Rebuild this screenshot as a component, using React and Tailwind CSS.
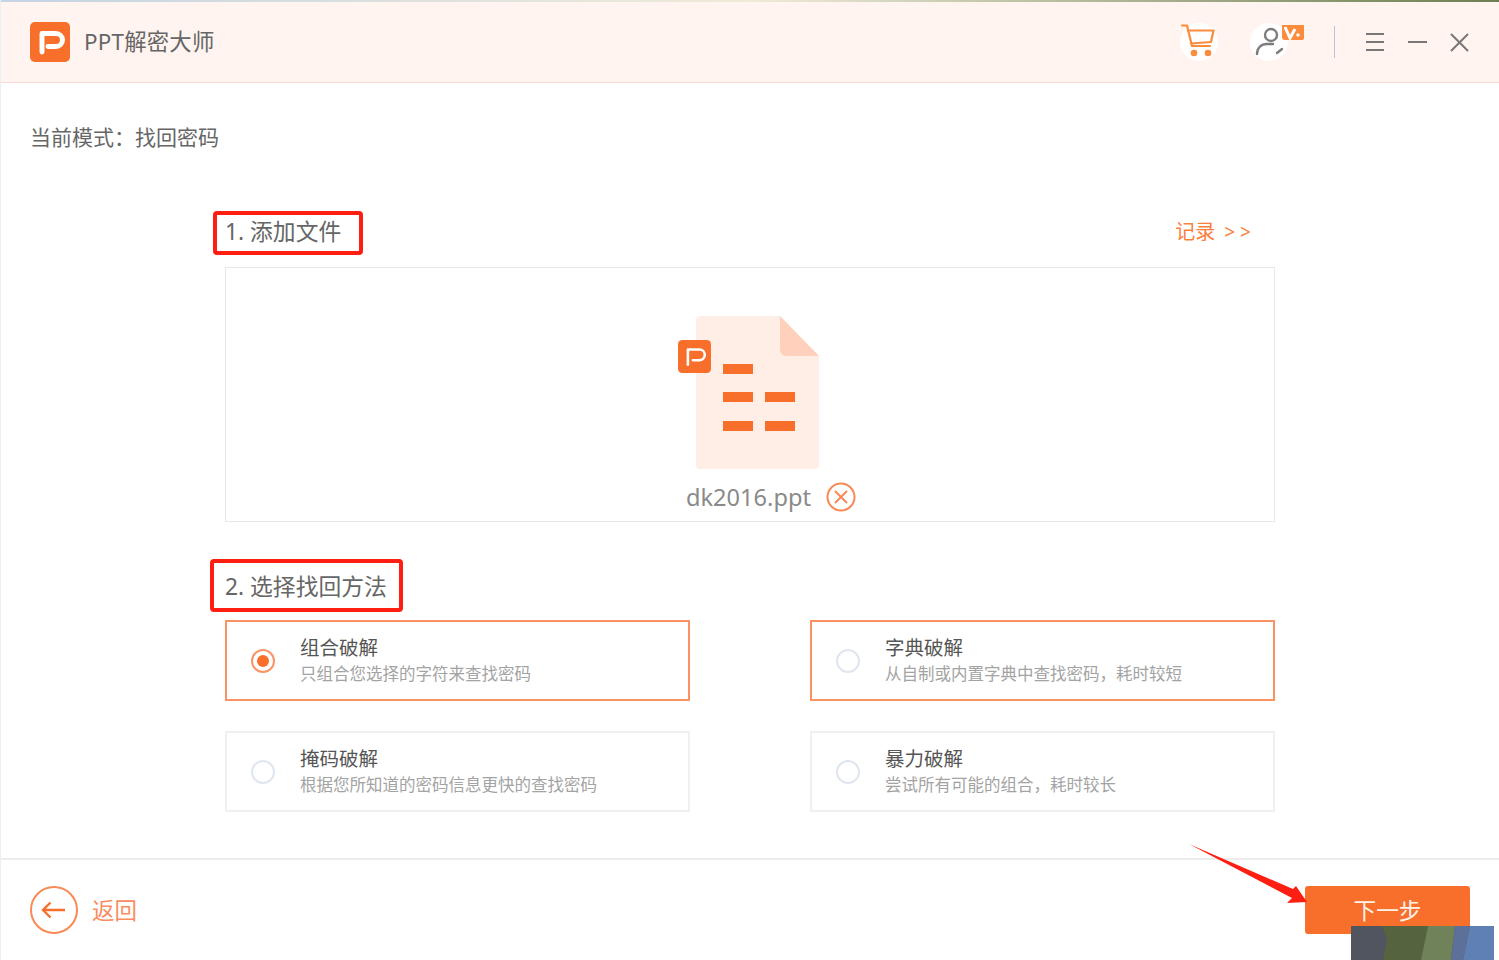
import React from "react";

const PLogo = ({ size, stroke = 3.8 }) => (
  <svg width={size} height={size} viewBox="0 0 40 40" className="block">
    <rect width="40" height="40" rx="5" fill="#f76f2b" />
    <path d="M12 30V11.500H26a6.500 6.500 0 0 1 0 13H18" fill="none" stroke="#fff" strokeWidth={stroke * 1.3} strokeLinecap="round" strokeLinejoin="round" />
  </svg>
);

const Radio = ({ checked }) =>
  checked ? (
    <span className="w-6 h-6 rounded-full border-2 border-[#fa9468] flex items-center justify-center shrink-0">
      <span className="w-3 h-3 rounded-full bg-[#f76f2b]" />
    </span>
  ) : (
    <span className="w-6 h-6 rounded-full border-2 border-[#dfe6f0] shrink-0" />
  );

const Option = ({ title, desc, active, checked }) => (
  <div className={`h-[81px] flex items-center pl-[24px] ${active ? "border-2 border-[#fb9264]" : "border-2 border-[#f0f0f0]"}`}>
    <Radio checked={checked} />
    <div className="ml-[25px] mb-[2px] flex flex-col">
      <span className="text-[19.500px] leading-[27px] text-[#555]">{title}</span>
      <span className="text-[16.500px] leading-[25px] text-[#a3a3a3]">{desc}</span>
    </div>
  </div>
);

const Label = ({ children, cls }) => (
  <div className={`border-[4px] border-[#ff1f12] rounded-[4px] flex items-center text-[22.800px] text-[#666] whitespace-nowrap ${cls}`}>
    {children}
  </div>
);

export default function App() {
  return (
    <div
      className="w-[1499px] h-[960px] relative overflow-hidden bg-white flex flex-col border-l border-[#e9eff6]"
      style={{ fontFamily: '"Noto Sans", "Noto Sans CJK SC", sans-serif' }}
    >
      <div className="h-[2px] -ml-px shrink-0 bg-gradient-to-r from-[#c4d4e4] via-[#f0ebd8] to-[#6d7f52]" />
      <header className="h-[81px] shrink-0 bg-[#fff4f0] border-b border-[#fbd8d8] flex items-center pl-[29px] pr-[30px]">
        <PLogo size={40} />
        <span className="ml-[14px] text-[22.400px] text-[#666] tracking-[0.2px]">PPT解密大师</span>
        <div className="ml-auto flex items-center">
          <span className="w-[38px] h-[38px] rounded-full bg-white flex items-center justify-center">
            <svg width="36" height="36" viewBox="0 0 36 36" fill="none" stroke="#fa8c3c" strokeWidth="2.200" strokeLinejoin="round" strokeLinecap="round">
              <path d="M1 1.500h5l5 20.500h18" />
              <path d="M7 6.500h25.500L30 18 10 19.500" />
              <circle cx="13" cy="29" r="2.200" fill="#fa8c3c" />
              <circle cx="27" cy="29" r="2.200" fill="#fa8c3c" />
            </svg>
          </span>
          <div className="ml-[32px] relative w-[38px] h-[38px] rounded-full bg-white">
            <svg width="38" height="38" viewBox="0 0 38 38" fill="none" stroke="#7c7c7c" strokeWidth="2.400" strokeLinecap="round" className="block">
              <circle cx="21" cy="12" r="6" />
              <path d="M7 31c0-6 4-10 10-10h6" />
              <path d="M27 30l5-4" />
            </svg>
            <svg width="25" height="16" viewBox="0 0 25 16" className="absolute left-[29px] top-[2px]">
              <path d="M3 0h21a1 1 0 0 1 1 1v12a2 2 0 0 1-2 2H6a3 3 0 0 1-3-3z" fill="#fa8c3c" />
              <path d="M6 2l5 11 5-9" fill="none" stroke="#fff" strokeWidth="3" />
              <circle cx="19" cy="10" r="1.800" fill="#fff" />
            </svg>
          </div>
          <span className="ml-[46px] w-px h-8 bg-[#b8c6da]" />
          <svg width="20" height="20" viewBox="0 0 20 20" stroke="#777" strokeWidth="2" className="ml-[30px]">
            <path d="M1 2h18M1 10h18M1 18h18" />
          </svg>
          <svg width="19" height="4" viewBox="0 0 19 4" stroke="#777" strokeWidth="2" className="ml-[23px]">
            <path d="M0 2h19" />
          </svg>
          <svg width="19" height="19" viewBox="0 0 19 19" stroke="#777" strokeWidth="2" className="ml-[23px]">
            <path d="M1 1l17 17M18 1L1 18" />
          </svg>
        </div>
      </header>

      <main className="flex-1 flex flex-col">
        <div className="h-[110px] pl-[29px] pt-[39px] text-[21px] leading-[30px] text-[#666] shrink-0">当前模式：找回密码</div>
        <section className="w-[1050px] ml-[224px]">
          <div className="flex items-center justify-between h-[44px] mt-[18px] mb-[12px]">
            <Label cls="w-[150px] h-[44px] -ml-[12px] pl-[8px] pb-[2px]">1. 添加文件</Label>
            <span className="text-[20px] text-[#fa8040] mr-[24px] whitespace-nowrap -translate-y-px">
              记录<span className="ml-[9px] text-[19px]">&gt; &gt;</span>
            </span>
          </div>
          <div className="h-[255px] border border-[#e8e8e8] flex flex-col items-center pt-[48px]">
            <div className="relative w-[123px] h-[153px] ml-[14px]">
              <svg width="123" height="153" viewBox="0 0 123 153" className="block">
                <path d="M4 0H84L123 40V149a4 4 0 0 1-4 4H4a4 4 0 0 1-4-4V4a4 4 0 0 1 4-4z" fill="#ffeee5" />
                <path d="M84 0L123 40H90a6 6 0 0 1-6-6z" fill="#ffd0bc" />
                <path d="M27 48h30v10H27zM27 76h30v10H27zM69 76h30v10H69zM27 105h30v10H27zM69 105h30v10H69z" fill="#f76f2b" />
              </svg>
              <div className="absolute -left-[18px] top-[24px]">
                <PLogo size={33} stroke={2.400} />
              </div>
            </div>
            <div className="flex items-center ml-[42px] mt-[12px] h-[34px]">
              <span className="text-[23.600px] text-[#8a8a8a]">dk2016.ppt</span>
              <svg width="30" height="30" viewBox="0 0 30 30" fill="none" stroke="#f98a55" strokeWidth="2" className="ml-[15px] -mt-[2px]">
                <circle cx="15" cy="15" r="13.500" />
                <path d="M9 9l12 12M21 9L9 21" />
              </svg>
            </div>
          </div>
          <div className="mt-[37px] mb-[8px]">
            <Label cls="w-[193px] h-[53px] -ml-[15px] pl-[11px] pt-[4px]">2. 选择找回方法</Label>
          </div>
          <div className="grid grid-cols-[465px_465px] gap-x-[120px] gap-y-[30px]">
            <Option active checked title="组合破解" desc="只组合您选择的字符来查找密码" />
            <Option active title="字典破解" desc="从自制或内置字典中查找密码，耗时较短" />
            <Option title="掩码破解" desc="根据您所知道的密码信息更快的查找密码" />
            <Option title="暴力破解" desc="尝试所有可能的组合，耗时较长" />
          </div>
        </section>
      </main>

      <footer className="h-[102px] shrink-0 border-t-2 border-[#ececec] flex items-center justify-between pl-[29px] pr-[29px] pb-px">
        <div className="flex items-center">
          <svg width="48" height="48" viewBox="0 0 48 48" fill="none" stroke="#f98a55" strokeWidth="2">
            <circle cx="24" cy="24" r="23" />
            <path d="M13 24h22M20.500 16.500L13 24l7.500 7.500" stroke="#f76f2b" strokeWidth="2.400" />
          </svg>
          <span className="ml-[14px] pt-[2px] text-[22.500px] text-[#fa8c5f]">返回</span>
        </div>
        <button className="w-[165px] h-[48px] rounded-[3px] bg-[#f76f2b] text-[#fff3ec] text-[22.600px] pt-[2px]">下一步</button>
      </footer>

      <svg width="1499" height="960" viewBox="0 0 1499 960" className="absolute left-0 top-0 pointer-events-none -ml-px">
        <path d="M1189 844L1293 889L1296 886L1307 902L1287 903L1292 898Z" fill="#ff1f12" />
      </svg>
      <svg width="143" height="34" viewBox="0 0 143 34" className="absolute left-[1350px] top-[926px]">
        <rect width="143" height="34" fill="#50555f" />
        <path d="M31 0H77L70 34H32L36 14z" fill="#56633f" />
        <path d="M77 0H104L100 34H70z" fill="#6f8259" />
        <path d="M104 0H119L112 34H100z" fill="#5d7099" />
        <path d="M119 0H143V34H112z" fill="#5e80b2" />
      </svg>
    </div>
  );
}
